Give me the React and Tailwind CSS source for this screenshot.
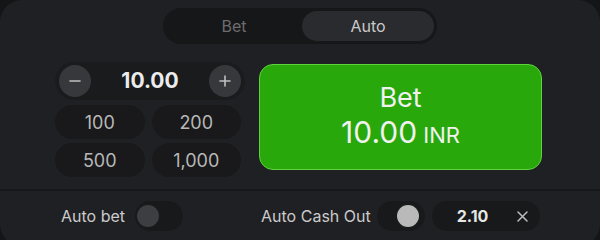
import React, { useState } from 'react';

function Toggle({ on }) {
  return (
    <div className="flex h-[30px] w-[48px] items-center rounded-full bg-[#18191b] px-[2px]">
      <div
        className={`h-[22px] w-[22px] rounded-full ${
          on ? 'ml-auto mr-[4px] bg-[#b9b9b9]' : 'bg-[#3d3e41]'
        }`}
      />
    </div>
  );
}

export default function App() {
  const [tab, setTab] = useState('auto');
  const quick = ['100', '200', '500', '1,000'];

  return (
    <div className="h-[240px] w-[600px] overflow-hidden bg-[#141516]" style={{ fontFamily: 'Inter, "Noto Sans", sans-serif' }}>
      <div className="flex h-[246px] w-[600px] flex-col rounded-[22px] bg-[#1f2023]">
        {/* Tabs */}
        <div className="flex justify-center pt-[8px]">
          <div className="flex h-[36px] w-[274px] items-center rounded-full bg-[#161719] p-[3px]">
            <button
              onClick={() => setTab('bet')}
              className={`flex h-full flex-1 items-center justify-center rounded-full text-[16px] ${
                tab === 'bet' ? 'bg-[#2a2b2e] text-[#c9c9c9]' : 'text-[#6c6c6e]'
              }`}
            >
              Bet
            </button>
            <button
              onClick={() => setTab('auto')}
              className={`flex h-full w-[132px] items-center justify-center rounded-full text-[16px] ${
                tab === 'auto' ? 'bg-[#2a2b2e] text-[#c9c9c9]' : 'text-[#6c6c6e]'
              }`}
            >
              Auto
            </button>
          </div>
        </div>

        {/* Controls */}
        <div className="mt-[18px] flex gap-[14px] pl-[55px]">
          <div className="flex w-[190px] flex-col gap-[5px]">
            <div className="flex h-[38px] items-center justify-between rounded-full bg-[#1a1b1d] px-[4px]">
              <button className="flex h-[32px] w-[32px] items-center justify-center rounded-full bg-[#37383b] text-[#bfbfbf]">
                <svg width="12" height="12" viewBox="0 0 12 12"><path d="M1 6h10" stroke="currentColor" strokeWidth="1.6" strokeLinecap="round" /></svg>
              </button>
              <span className="text-[21px] font-bold text-[#ececec]">10.00</span>
              <button className="flex h-[32px] w-[32px] items-center justify-center rounded-full bg-[#37383b] text-[#bfbfbf]">
                <svg width="12" height="12" viewBox="0 0 12 12"><path d="M1 6h10M6 1v10" stroke="currentColor" strokeWidth="1.6" strokeLinecap="round" /></svg>
              </button>
            </div>
            <div className="grid grid-cols-2 gap-x-[7px] gap-y-[4px] pr-[4px]">
              {quick.map((q) => (
                <button key={q} className="flex h-[34px] items-center justify-center rounded-full bg-[#19191b] text-[18px] text-[#b8b8b8]">
                  {q}
                </button>
              ))}
            </div>
          </div>

          <button className="mt-[2px] flex h-[106px] w-[283px] flex-col items-center justify-center rounded-[14px] border border-[#5fd23e] bg-[#28a80b] text-[#f1f1f1]">
            <span className="text-[27px] leading-[32px]">Bet</span>
            <span className="flex items-baseline gap-[6px] leading-[36px]">
              <span className="text-[30px]">10.00</span>
              <span className="text-[22px]">INR</span>
            </span>
          </button>
        </div>

        {/* Divider */}
        <div className="mt-[12px] h-[2px] w-full bg-[#17181a]" />

        {/* Bottom row */}
        <div className="mt-[10px] flex items-center pl-[61px]">
          <span className="text-[16px] text-[#cbcbcb]">Auto bet</span>
          <div className="ml-[10px]">
            <Toggle on={false} />
          </div>
          <span className="ml-[78px] text-[16px] text-[#cbcbcb]">Auto Cash Out</span>
          <div className="ml-[6px]">
            <Toggle on={true} />
          </div>
          <div className="ml-[7px] flex h-[30px] w-[108px] items-center rounded-full bg-[#18191b] pl-[25px] pr-[12px]">
            <span className="text-[16px] font-bold text-[#e6e6e6]">2.10</span>
            <svg className="ml-auto" width="11" height="11" viewBox="0 0 11 11">
              <path d="M1 1l9 9M10 1l-9 9" stroke="#bdbdbd" strokeWidth="1.5" strokeLinecap="round" />
            </svg>
          </div>
        </div>
      </div>
    </div>
  );
}
